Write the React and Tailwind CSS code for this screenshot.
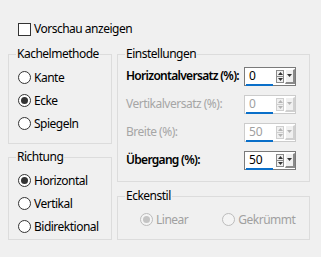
import React from "react";

function Radio({ checked, disabled }) {
  return (
    <span
      className={
        "flex h-[13px] w-[13px] shrink-0 items-center justify-center rounded-full border " +
        (disabled ? "border-[#bcbcbc] bg-[#f4f4f4]" : "border-[#333333] bg-white")
      }
    >
      {checked && (
        <span className={"h-[7px] w-[7px] rounded-full " + (disabled ? "bg-[#c4c4c4]" : "bg-[#333333]")} />
      )}
    </span>
  );
}

function RadioRow({ label, checked, disabled }) {
  return (
    <div className="flex h-[23px] items-center gap-[3px]">
      <Radio checked={checked} disabled={disabled} />
      <span className={"whitespace-nowrap " + (disabled ? "text-[#a0a0a0]" : "text-black")}>{label}</span>
    </div>
  );
}

function Spinner({ value, disabled }) {
  const tri = disabled ? "#b4b4b4" : "#333333";
  return (
    <div
      className={
        "relative flex h-[19px] w-[52px] shrink-0 items-center border bg-white tracking-normal " +
        (disabled ? "border-[#cccccc]" : "border-[#7a7a7a]")
      }
    >
      <span className={"ml-[4px] w-[27px] text-[12px] leading-none " + (disabled ? "text-[#a0a0a0]" : "text-black")}>{value}</span>
      <span className="absolute bottom-[-1px] left-[1px] h-[2px] w-[27px] bg-[#0a6fc9]" />
      <div className={"flex h-[13px] w-[8px] flex-col border bg-[#f0f0f0] " + (disabled ? "border-[#cfcfcf]" : "border-[#8a8a8a]")}>
        <div className={"flex flex-1 items-center justify-center border-b " + (disabled ? "border-[#cfcfcf]" : "border-[#8a8a8a]")}>
          <svg width="5" height="3" viewBox="0 0 5 3"><polygon points="2.5,0 5,3 0,3" fill={tri} /></svg>
        </div>
        <div className="flex flex-1 items-center justify-center">
          <svg width="5" height="3" viewBox="0 0 5 3"><polygon points="0,0 5,0 2.5,3" fill={tri} /></svg>
        </div>
      </div>
      <div
        className={
          "ml-[1px] flex h-[15px] w-[10px] items-center justify-center border-t border-l border-b-2 border-r-2 " +
          (disabled
            ? "border-t-white border-l-white border-b-[#d0d0d0] border-r-[#d0d0d0] bg-[#f0f0f0]"
            : "border-t-white border-l-white border-b-[#8a8a8a] border-r-[#8a8a8a] bg-[#f0f0f0]")
        }
      >
        <svg width="5" height="3" viewBox="0 0 5 3"><polygon points="0,0 5,0 2.5,3" fill={tri} /></svg>
      </div>
    </div>
  );
}

function Group({ title, className, inner, children }) {
  return (
    <fieldset className={"border border-[#dcdcdc] " + className}>
      <legend className="ml-[7px] px-[1px] leading-[16px] text-black">{title}</legend>
      <div className={inner}>{children}</div>
    </fieldset>
  );
}

function FieldRow({ label, value, disabled, bold }) {
  return (
    <div className="flex h-[28px] items-center justify-between">
      <span
        className={
          "whitespace-nowrap " +
          (disabled ? "text-[#a6a6a6] " : "text-black ") +
          (bold ? "font-semibold tracking-[-0.7px]" : "")
        }
      >
        {label}
      </span>
      <Spinner value={value} disabled={disabled} />
    </div>
  );
}

export default function App() {
  return (
    <div
      className="h-[257px] w-[321px] overflow-hidden bg-[#f0f0f0] text-[12px] leading-[16px] tracking-[-0.5px]"
      style={{ fontFamily: '"Noto Sans", "Open Sans", sans-serif' }}
    >
      <div className="flex h-[46px] items-start pl-[18px] pt-[21px]">
        <div className="flex items-center gap-[3px]">
          <span className="h-[13px] w-[13px] border border-[#333333] bg-white" />
          <span>Vorschau anzeigen</span>
        </div>
      </div>
      <div className="flex gap-[5px] pl-[8px]">
        <div className="flex w-[104px] flex-col gap-[5px]">
          <Group title="Kachelmethode" className="h-[98px]" inner="pl-[9px] pt-[4px]">
            <RadioRow label="Kante" />
            <RadioRow label="Ecke" checked />
            <RadioRow label="Spiegeln" />
          </Group>
          <Group title="Richtung" className="h-[91px]" inner="pl-[9px] pt-[4px]">
            <RadioRow label="Horizontal" checked />
            <RadioRow label="Vertikal" />
            <RadioRow label="Bidirektional" />
          </Group>
        </div>
        <div className="flex w-[193px] flex-col gap-[6px]">
          <Group title="Einstellungen" className="h-[136px]" inner="pl-[8px] pr-[13px]">
            <FieldRow label="Horizontalversatz (%):" value="0" bold />
            <FieldRow label="Vertikalversatz (%):" value="0" disabled />
            <FieldRow label="Breite (%):" value="50" disabled />
            <FieldRow label="Übergang (%):" value="50" bold />
          </Group>
          <Group title="Eckenstil" className="h-[52px]" inner="pl-[22px] pt-[4px]">
            <div className="flex items-center">
              <RadioRow label="Linear" checked disabled />
              <div className="ml-[34px]">
                <RadioRow label="Gekrümmt" disabled />
              </div>
            </div>
          </Group>
        </div>
      </div>
    </div>
  );
}
